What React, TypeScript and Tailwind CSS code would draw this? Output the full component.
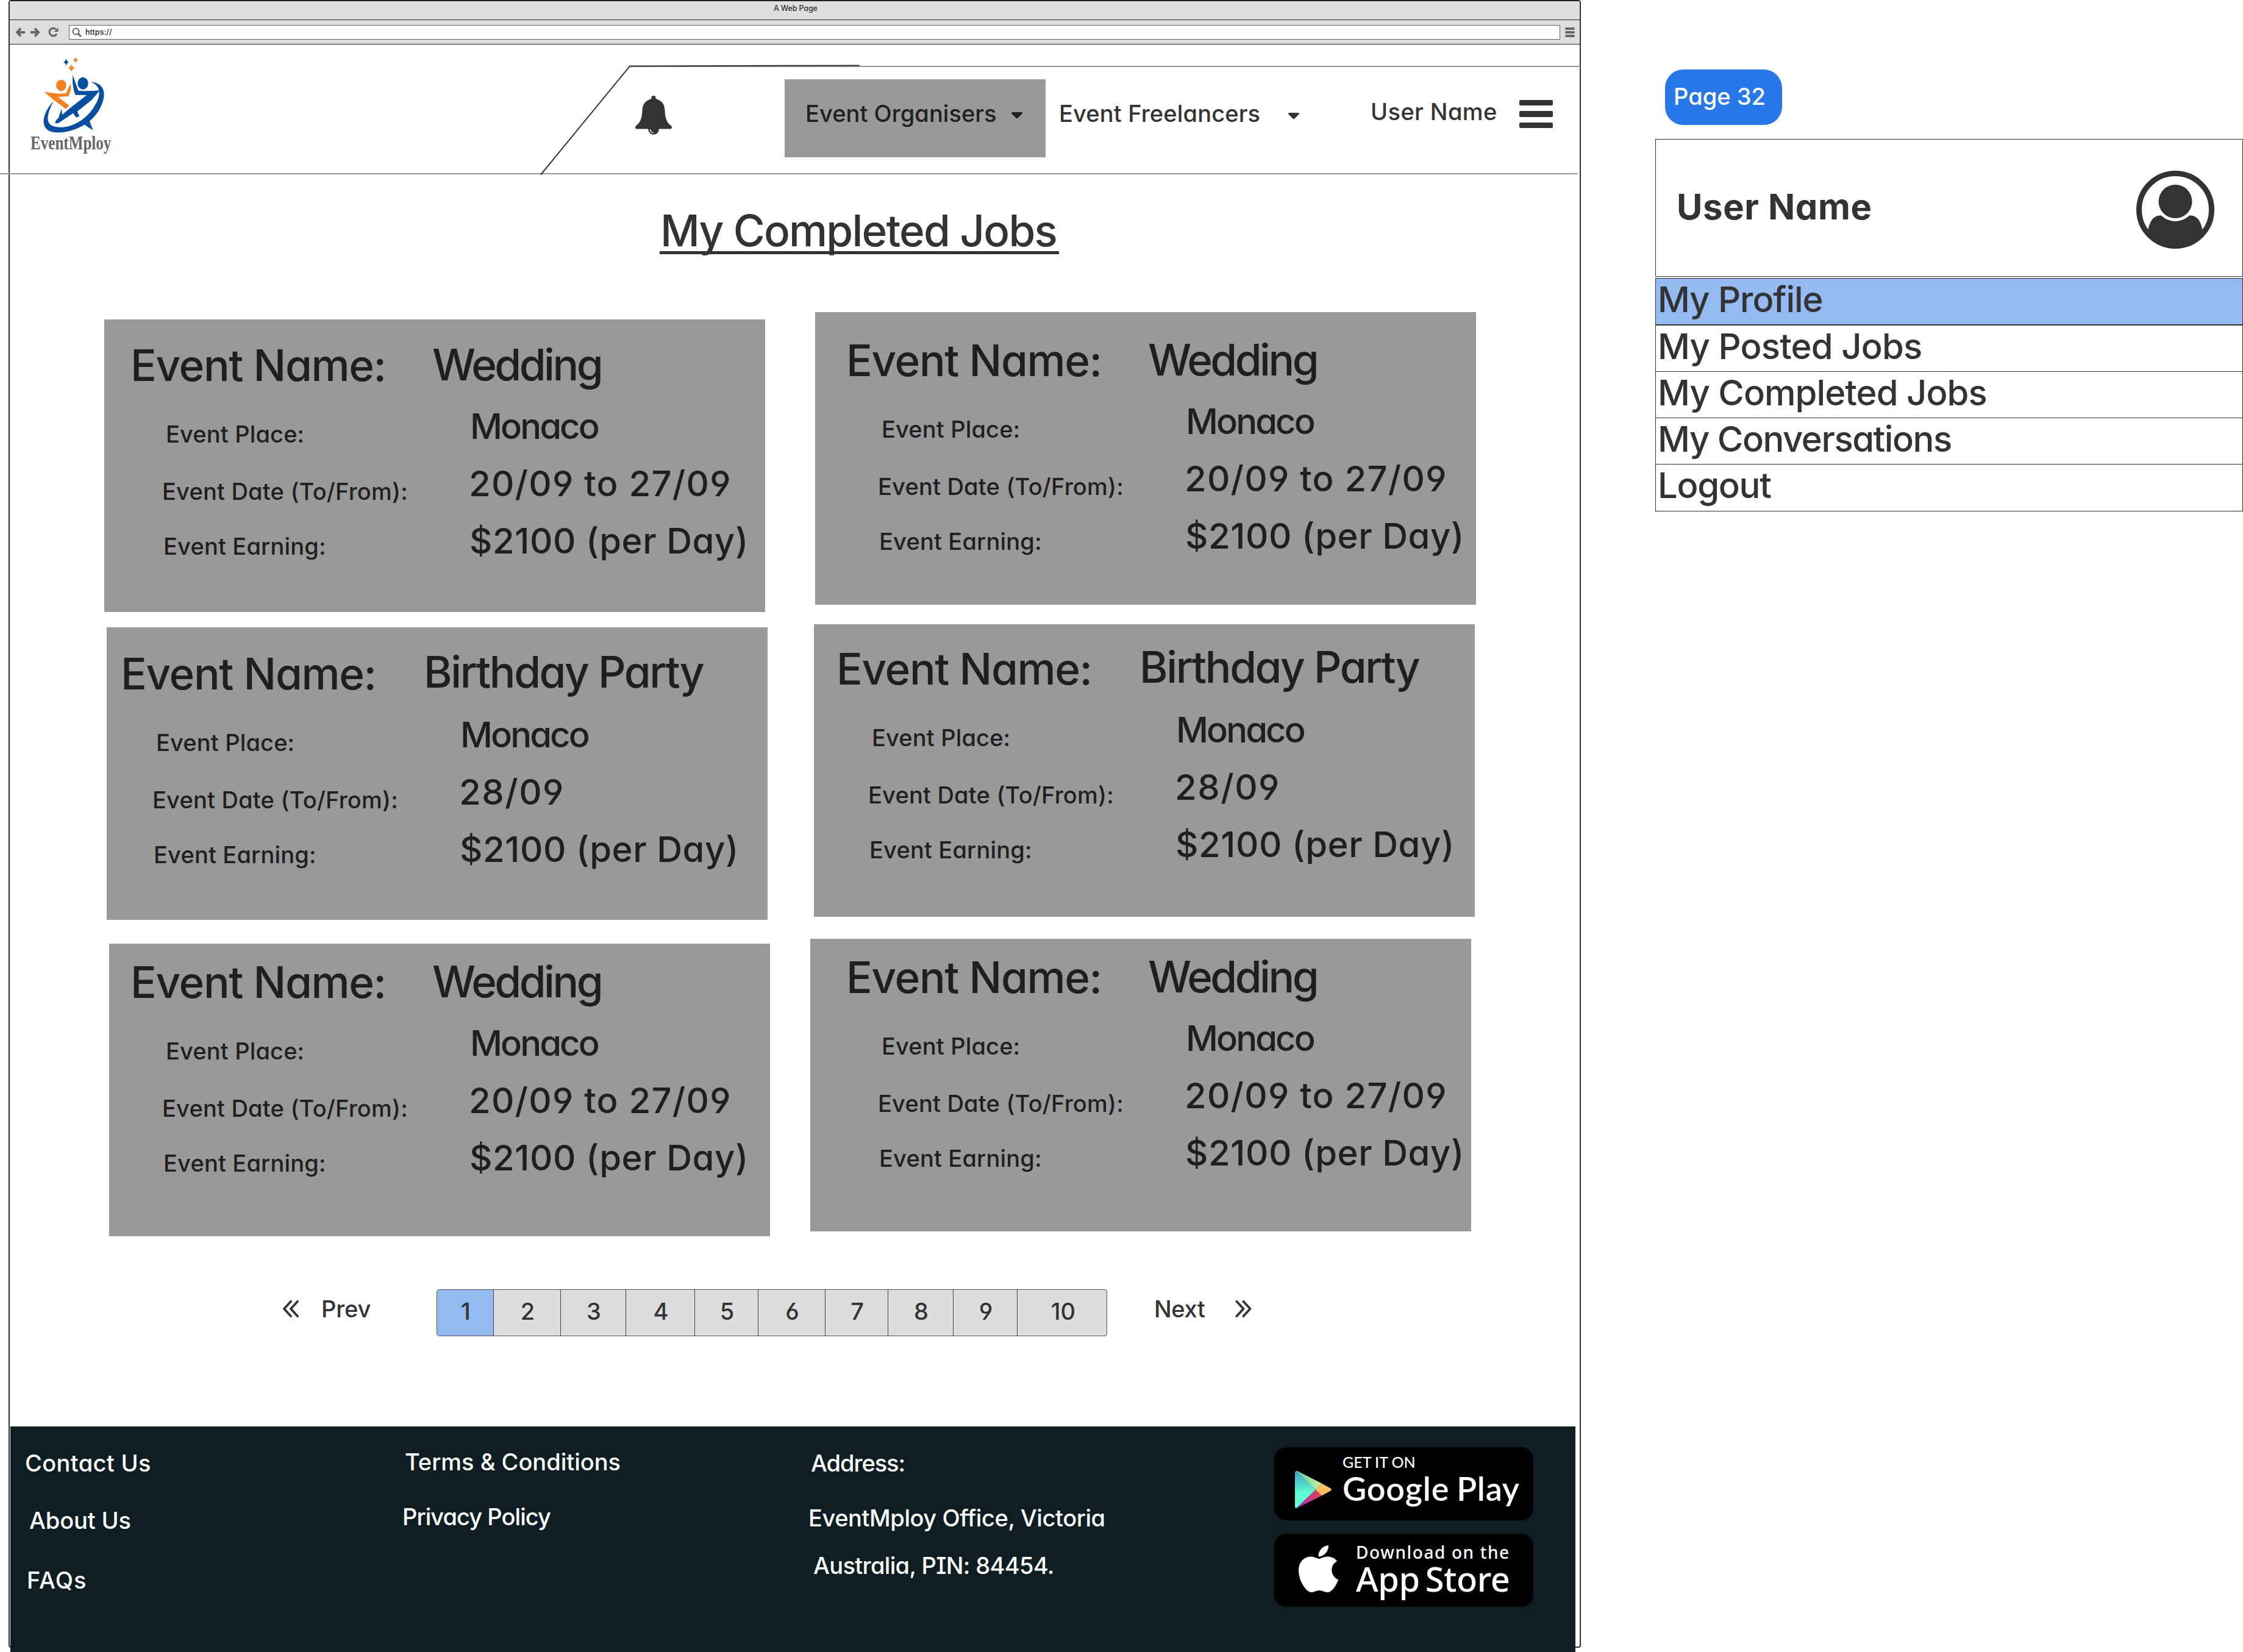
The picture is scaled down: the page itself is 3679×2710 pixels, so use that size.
import type { ReactNode } from "react";

type Card = {
  name: string;
  nameClass: string;
  date: string;
  dateClass: string;
  box: string;
};

const wedding = {
  name: "Wedding",
  nameClass: "tracking-[-3.5px] ml-[-3px]",
  date: "20/09 to 27/09",
  dateClass: "tracking-[1.22px]",
};
const birthday = {
  name: "Birthday Party",
  nameClass: "tracking-[-2.4px] ml-[-1px] relative -top-0.5",
  date: "28/09",
  dateClass: "tracking-[1.5px]",
};

const leftCards: Card[] = [
  { ...wedding, box: "mt-[107px] ml-[155px] pt-[38px] pl-[43px]" },
  { ...birthday, box: "mt-[25px] ml-[159px] pt-[39px] pl-[23px]" },
  { ...wedding, box: "mt-[39px] ml-[163px] pt-[26px] pl-[35px]" },
];
const rightCards: Card[] = [
  { ...wedding, box: "mt-[95px] ml-[21px] pt-[42px] pl-[51px]" },
  { ...birthday, box: "mt-[32px] ml-[19px] pt-[36px] pl-[37px]" },
  { ...wedding, box: "mt-[36px] ml-[13px] pt-[26px] pl-[59px]" },
];

const pages: [string, string][] = [
  ["1", "w-[93px] bg-[#94baf1]"],
  ["2", "w-[110px]"],
  ["3", "w-[107px]"],
  ["4", "w-[113px]"],
  ["5", "w-[104px]"],
  ["6", "w-[110px]"],
  ["7", "w-[103px]"],
  ["8", "w-[107px]"],
  ["9", "w-[105px]"],
  ["10", "w-[148px]"],
];

const menu: [string, string][] = [
  ["My Profile", "h-[78px] border-t border-b-2 bg-[#94baf1] pb-[7px] tracking-[-1.06px]"],
  ["My Posted Jobs", "h-[76px] border-b pb-[7px] tracking-[-0.85px]"],
  ["My Completed Jobs", "h-[76px] border-b pb-[8px] tracking-[-0.94px]"],
  ["My Conversations", "h-[76px] border-b pb-[8px] tracking-[-1.45px]"],
  ["Logout", "h-[77px] border-b pb-[9px] tracking-[-1.3px]"],
];

function Text({ className, children }: { className: string; children: ReactNode }) {
  return <div className={`text-[38px] leading-[48px] whitespace-nowrap ${className}`}>{children}</div>;
}

function Caret({ className }: { className: string }) {
  return (
    <svg className={`h-[11px] w-[18px] shrink-0 ${className}`} viewBox="0 0 18 11">
      <path d="M1 0H17Q18.500 1 17.500 2.500L10.500 9.500Q9 11 7.500 9.500L.5 2.500Q-.5 1 1 0Z" fill="currentColor" />
    </svg>
  );
}

function Logo() {
  return (
    <svg className="h-[132px] w-[130px]" viewBox="55 90 130 132">
      <g transform="scale(.574 .33333)">
        <path fill="#0a4ea2" d="M189 289Q191 303 197 306Q191 309 189 323Q187 309 181 306Q187 303 189 289Z" />
        <path fill="#f58220" d="M216 280Q218 293 223 296Q218 299 216 311Q214 299 209 296Q214 293 216 280Z" />
        <path fill="#f58220" d="M204 316Q206 331 214 335Q206 339 204 353Q202 339 194 335Q202 331 204 316Z" />
        <ellipse cx="175" cy="420" rx="14.500" ry="28" fill="#f58220" />
        <ellipse cx="237" cy="410" rx="15" ry="30" fill="#0a4ea2" />
        <path fill="#f58220" d="M126 452L168 461L188 459L202 412L203 440L196 474L166 477L198 520L188 536L152 490Z" />
        <path
          fill="#0a4ea2"
          d="M208 370L224 446Q260 450 286 444L262 492L221 548L227 572L218 578L209 557L166 607L157 606L160 592L200 532L248 468L215 467Q205 420 208 370Z"
        />
        <path fill="#0a4ea2" d="M176 535L165 590L178 570Z" />
        <path
          fill="#0a4ea2"
          d="M258 403C304 408 306 476 282 545C255 620 200 655 160 652C114 648 114 570 154 495C130 570 132 612 154 622C190 640 240 602 267 530C292 470 288 418 258 403Z"
        />
        <path fill="#0a4ea2" d="M230 596L250 570L266 641Q246 622 230 596Z" />
      </g>
    </svg>
  );
}

function JobCard({ card }: { card: Card }) {
  return (
    <div className={`flex h-[480px] w-[1084px] bg-[#999] text-[#1f1f1f] ${card.box}`}>
      <div className="w-[493px] shrink-0 pt-px">
        <div className="text-[71px] leading-[72px] tracking-[-1.36px] whitespace-nowrap">Event Name:</div>
        <Text className="mt-[53px] ml-[58px] tracking-[0.15px]">Event Place:</Text>
        <Text className="mt-[46px] ml-[52px] tracking-[0.2px]">Event Date (To/From):</Text>
        <Text className="mt-[42px] ml-[54px] tracking-[0.18px]">Event Earning:</Text>
      </div>
      <div className="pl-[5px] text-[58px] leading-[60px] whitespace-nowrap">
        <div className={`text-[71px] leading-[72px] ${card.nameClass}`}>{card.name}</div>
        <div className="mt-[35px] ml-[59px] tracking-[-2.9px]">Monaco</div>
        <div className={`mt-[34px] ml-[57px] ${card.dateClass}`}>{card.date}</div>
        <div className="mt-[34px] ml-[58px] tracking-[0.55px]">$2100 (per Day)</div>
      </div>
    </div>
  );
}

function BrowserBar() {
  return (
    <>
      <div className="h-[31px] border-b border-[#222] bg-[#dededc] pl-[1253px] text-[12.5px] leading-[23px] tracking-[-0.16px]">
        A Web Page
      </div>
      <div className="flex h-10 items-center border-b border-[#222] bg-[#dededc] pl-[9px] text-[#666]">
        <svg className="size-4" viewBox="0 0 16 16" fill="none" stroke="currentColor" strokeWidth="3.800">
          <path d="M9 1.500L3 8L9 14.500M3 8H16" />
        </svg>
        <svg className="ml-[9px] size-4" viewBox="0 0 16 16" fill="none" stroke="currentColor" strokeWidth="3.800">
          <path d="M7 1.500L13 8L7 14.500M13 8H0" />
        </svg>
        <svg className="ml-[13px] size-[17px]" viewBox="0 0 17 17" fill="none" stroke="currentColor" strokeWidth="3.200">
          <path d="M14 11.500A6.300 6.300 0 1 1 12.500 3.800" />
          <path d="M16.500 1V8H9.500Z" fill="currentColor" stroke="none" />
        </svg>
        <div className="ml-[17px] flex h-6 w-[2446px] items-center border border-[#666] bg-white pl-1">
          <svg className="size-4" viewBox="0 0 16 16" fill="none" stroke="currentColor" strokeWidth="2">
            <circle cx="6.500" cy="6.500" r="5" />
            <path d="M10 10L15 15" strokeWidth="3" />
          </svg>
          <span className="ml-1.5 text-[12.5px] leading-[22px] tracking-[0.06px] text-[#222]">https://</span>
        </div>
        <div className="ml-2 flex flex-col gap-0.5">
          <div className="h-1 w-4 rounded-xs bg-[#666]" />
          <div className="h-1 w-4 rounded-xs bg-[#666]" />
          <div className="h-1 w-4 rounded-xs bg-[#666]" />
        </div>
      </div>
    </>
  );
}

function Header() {
  return (
    <header className="relative flex h-[213px] items-start">
      <svg className="absolute -top-[73px] -left-4 h-[290px] w-[2592px]" viewBox="0 0 2592 290" fill="none">
        <path d="M0 285H2588M1033 109H2592" stroke="#999" strokeWidth="2" />
        <path d="M887 286.500L1033 108.500L1410 107.500" stroke="#333" strokeWidth="2" />
      </svg>
      <div className="relative mt-[17px] ml-[34px] w-[992px]">
        <div className="pl-[5px]">
          <Logo />
        </div>
        <div className="-mt-1 w-fit origin-left scale-x-[0.784] font-['Liberation_Serif'] text-[32px] leading-[32px] font-bold text-[#666]">
          EventMploy
        </div>
      </div>
      <svg className="mt-[84px] h-16 w-[60px]" viewBox="0 0 60 64">
        <circle cx="30" cy="55" r="8.800" fill="#333" />
        <path
          fill="#333"
          d="M30 0C32.500 0 34 1.500 33.500 5C43 8 48 13 48.500 24C49 38 52 44 59 49.500C61 52 59.500 54.500 57.500 54.500H2.500C.5 54.500 -1 52 1 49.500C8 44 11 38 11.500 24C12 13 17 8 26.500 5C26 1.500 27.500 0 30 0Z"
        />
        <path d="M24.500 55Q24.500 60 30 61" fill="none" stroke="#fff" strokeWidth="1.400" />
      </svg>
      <div className="mt-[57px] ml-[185px] flex h-32 w-[428px] items-start bg-[#999] pt-8 pl-[34px] text-[#1f1f1f]">
        <Text className="w-[338px] tracking-[0.05px]">Event Organisers</Text>
        <Caret className="mt-[22px]" />
      </div>
      <Text className="mt-[89px] ml-[22px] w-[376px] tracking-[0.15px]">Event Freelancers</Text>
      <Caret className="mt-[112px]" />
      <Text className="mt-[86px] ml-[117px] w-[244px] tracking-[0.4px]">User Name</Text>
      <div className="mt-[91px] flex flex-col gap-[9px]">
        <div className="h-[9px] w-[55px] rounded-xs bg-[#333]" />
        <div className="h-[10px] w-[55px] rounded-xs bg-[#333]" />
        <div className="h-[9px] w-[55px] rounded-xs bg-[#333]" />
      </div>
    </header>
  );
}

function Pagination() {
  return (
    <div className="mt-[87px] flex h-[77px] items-start">
      <svg className="mt-[18px] ml-[448px] h-7 w-[26px]" viewBox="0 0 26 28" fill="none" stroke="#333" strokeWidth="3.800" strokeLinecap="round" strokeLinejoin="round">
        <path d="M13 2L2 14L13 26M24 2L13 14L24 26" />
      </svg>
      <Text className="mt-2 ml-[37px] w-[189px] tracking-[-0.15px]">Prev</Text>
      <div className="flex h-[77px] w-[1100px] overflow-hidden rounded-sm border border-[#555] bg-[#ddd]">
        {pages.map(([label, cls]) => (
          <div
            key={label}
            className={`flex shrink-0 items-center justify-center border-r border-[#444] pb-[5px] pl-0.5 text-[38px] last:border-r-0 ${cls}`}
          >
            {label}
          </div>
        ))}
      </div>
      <Text className="mt-2 ml-[77px] w-[133px] tracking-[-0.37px]">Next</Text>
      <svg className="mt-[18px] h-7 w-[27px]" viewBox="0 0 26 28" fill="none" stroke="#333" strokeWidth="3.800" strokeLinecap="round" strokeLinejoin="round">
        <path d="M2 2L13 14L2 26M13 2L24 14L13 26" />
      </svg>
    </div>
  );
}

function Footer() {
  return (
    <footer className="mt-[148px] ml-px flex h-[370px] w-[2567px] bg-[#0f1e23] pl-6 text-white">
      <div className="w-[619px] pt-9">
        <Text className="tracking-[0.35px]">Contact Us</Text>
        <Text className="mt-[46px] ml-[7px] tracking-[-0.13px]">About Us</Text>
        <Text className="mt-[50px] ml-[3px] tracking-[1.1px]">FAQs</Text>
      </div>
      <div className="w-[666px] pt-[34px]">
        <Text className="ml-1 tracking-[-0.01px]">Terms &amp; Conditions</Text>
        <Text className="mt-[42px] tracking-[-0.95px]">Privacy Policy</Text>
      </div>
      <div className="w-[764px] pt-9">
        <Text className="ml-1 tracking-[-1.05px]">Address:</Text>
        <Text className="mt-[42px] tracking-[-0.42px]">EventMploy Office, Victoria</Text>
        <Text className="mt-[30px] ml-2 tracking-[-0.65px]">Australia, PIN: 84454.</Text>
      </div>
      <div className="w-[425px] pt-[34px] whitespace-nowrap">
        <div className="flex h-[120px] items-start rounded-[20px] bg-black pl-[34px]">
          <svg className="mt-[39px] h-[61px] w-[60px]" viewBox="0 0 60 61">
            <defs>
              <linearGradient id="playLeft" x1="0" y1="0" x2="0" y2="1">
                <stop offset="0" stopColor="#3c9fc4" />
                <stop offset=".6" stopColor="#62fbd3" />
                <stop offset="1" stopColor="#6bffda" />
              </linearGradient>
              <linearGradient id="playTop" x1="0" y1="0" x2="1" y2="0">
                <stop offset="0" stopColor="#60c4ab" />
                <stop offset="1" stopColor="#c8f79f" />
              </linearGradient>
              <linearGradient id="playBottom" x1="0" y1="0" x2="1" y2="0">
                <stop offset="0" stopColor="#9c2fc0" />
                <stop offset="1" stopColor="#ea4350" />
              </linearGradient>
            </defs>
            <path d="M0 2Q1 0 2.500 0L34 31L2.500 61Q0 61 0 59Z" fill="url(#playLeft)" />
            <path d="M2 0Q3 -.5 5 .5L44 20.500L34 31Z" fill="url(#playTop)" />
            <path d="M2 61Q3 61.500 5 60L44 40.500L34 31Z" fill="url(#playBottom)" />
            <path d="M44 20.500L58.500 28.500Q61 30.500 58.500 32.500L44 40.500L34 31Z" fill="#ffbe5f" />
          </svg>
          <div className="pt-2.5 pl-[18px] font-['Lato']">
            <div className="text-[25px] leading-[28px]">GET IT ON</div>
            <div className="text-[54px] leading-[60px] font-semibold tracking-[0.75px] [word-spacing:-2px]">Google Play</div>
          </div>
        </div>
        <div className="mt-[22px] flex h-[120px] items-start rounded-[20px] bg-black pl-10">
          <svg className="mt-[19px] h-[77px] w-[65px]" viewBox="4 32 376 448" preserveAspectRatio="none">
            <path
              fill="#fff"
              d="M318.700 268.700c-.2-36.700 16.400-64.400 50-84.800-18.800-26.900-47.200-41.700-84.700-44.600-35.500-2.800-74.300 20.700-88.500 20.700-15 0-49.400-19.700-76.400-19.700C63.300 141.200 4 184.800 4 273.500q0 39.300 14.400 81.200c12.800 36.700 59 126.700 107.200 125.200 25.200-.6 43-17.900 75.800-17.900 31.800 0 48.300 17.900 76.400 17.900 48.600-.7 90.400-82.500 102.600-119.300-65.200-30.700-61.700-90-61.700-91.900zm-56.600-164.200c27.300-32.400 24.800-61.900 24-72.500-24.100 1.400-52 16.400-67.900 34.900-17.500 19.800-27.800 44.300-25.600 71.900 26.100 2 49.900-11.400 69.500-34.300z"
            />
          </svg>
          <div className="pt-[17px] pl-[29px] font-['Noto_Sans'] font-medium">
            <div className="text-[28px] leading-[26px] tracking-[1.6px]">Download on the</div>
            <div className="text-[56px] leading-[60px] tracking-[-0.5px] [word-spacing:-5px]">App Store</div>
          </div>
        </div>
      </div>
    </footer>
  );
}

function UserPanel() {
  return (
    <aside className="ml-[122px] w-[964px] shrink-0 pt-[114px]">
      <div className="ml-4 flex h-[91px] w-48 items-center rounded-[30px] bg-[#2777e8] pb-[3px] pl-[14px] text-white">
        <Text className="tracking-[0px]">Page 32</Text>
      </div>
      <div className="mt-[23px] flex h-[226px] items-center justify-between border border-[#333] pr-[46px] pl-[34px]">
        <div className="pb-[3px] text-[58px] font-bold tracking-[0.62px] whitespace-nowrap">User Name</div>
        <svg className="mt-1.5 size-32" viewBox="0 0 128 128">
          <circle cx="64" cy="64" r="59.500" fill="none" stroke="#333" strokeWidth="9" />
          <ellipse cx="64" cy="50.500" rx="27.500" ry="27.500" fill="#333" />
          <path
            fill="#333"
            d="M19.500 97C22 84 27 73 41 73.500C54 86 74 86 87 73.500C101 73 106 84 108.500 97C98 114 82 124 64 124S30 114 19.500 97Z"
          />
        </svg>
      </div>
      <div className="mt-0.5">
        {menu.map(([label, cls]) => (
          <div
            key={label}
            className={`flex items-center border-x border-[#333] pl-[3px] text-[58px] leading-[60px] whitespace-nowrap ${cls}`}
          >
            {label}
          </div>
        ))}
      </div>
    </aside>
  );
}

export default function App() {
  return (
    <div className="flex h-[2710px] w-[3679px] items-start overflow-hidden bg-white font-['Inter',sans-serif] font-medium text-[#333] [font-feature-settings:'cv11','cv08','cv03','cv04']">
      <div className="ml-3.5 h-[2703px] w-[2579px] shrink-0 rounded-sm border-2 border-[#333] border-t-[#231f20]">
        <BrowserBar />
        <Header />
        <main>
          <h1 className="mt-12 ml-[1066px] h-[83px] w-[655px] border-b-[5px] border-[#333] pl-px text-[71px] leading-[88px] tracking-[-1.79px] whitespace-nowrap">
            My Completed Jobs
          </h1>
          <div className="flex items-start">
            <div className="w-[1300px] shrink-0">
              {leftCards.map((card, i) => (
                <JobCard key={i} card={card} />
              ))}
            </div>
            <div>
              {rightCards.map((card, i) => (
                <JobCard key={i} card={card} />
              ))}
            </div>
          </div>
          <Pagination />
        </main>
        <Footer />
      </div>
      <UserPanel />
    </div>
  );
}
